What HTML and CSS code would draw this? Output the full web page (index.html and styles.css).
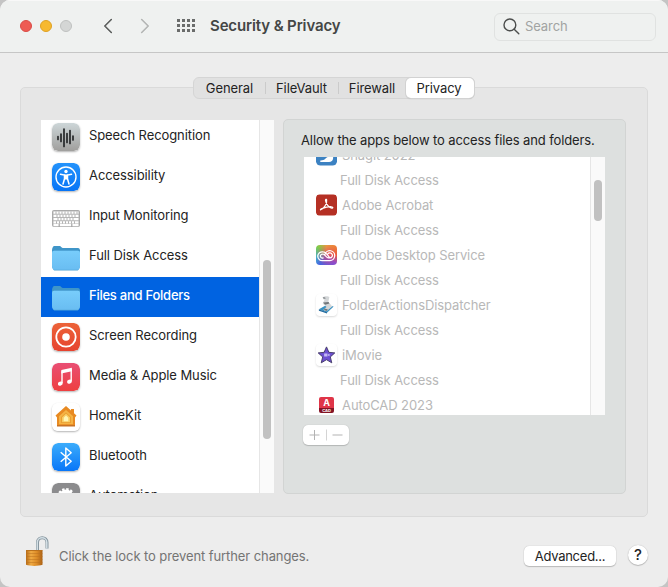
FILE: index.html
```
<!DOCTYPE html>
<html lang="en">
    <head>
        <meta charset="UTF-8">
        <meta name="viewport" content="width=device-width, initial-scale=1">
        <title>Security &amp; Privacy</title>
        <link rel="stylesheet" href="styles.css">
    </head>
    <body>
        <div class="window">
            <header class="titlebar">
                <div class="lights">
                    <span class="light red"></span>
                    <span class="light yellow"></span>
                    <span class="light gray"></span>
                </div>
                <svg class="nav-back" width="10" height="16" viewBox="0 0 10 16"><path d="M8.3 1.5 1.8 8l6.500 6.500"/></svg>
                <svg class="nav-forward" width="10" height="16" viewBox="0 0 10 16"><path d="M1.700 1.500 8.200 8l-6.500 6.500"/></svg>
                <svg class="nav-grid" width="18" height="13" viewBox="0 0 18 13">
                    <path d="M0 1.500h18M0 6.500h18M0 11.500h18"/>
                </svg>
                <h1 class="title">Security &amp; Privacy</h1>
                <div class="search">
                    <svg width="17" height="17" viewBox="0 0 17 17"><circle cx="6.900" cy="6.900" r="5.900"/><path d="m11.200 11.200 4.600 4.600"/></svg>
                    <span>Search</span>
                </div>
            </header>

            <nav class="tabs">
                <span class="tab general">General</span>
                <span class="tab filevault">FileVault</span>
                <span class="tab firewall">Firewall</span>
                <span class="tab active">Privacy</span>
            </nav>

            <main class="panel">
                <div class="sidebar">
                    <ul class="categories">
                        <li class="category">
                            <svg class="icon" viewBox="0 0 28 28">
                                <defs><linearGradient id="speech" x2="0" y2="1"><stop stop-color="#cdd6d8"/><stop offset="1" stop-color="#a09f9d"/></linearGradient></defs>
                                <rect width="28" height="28" rx="6" fill="url(#speech)"/>
                                <path d="M6 13.500v3M9 11v7.500M12 6v17.500M15 10.500v9M18 7.500v13M21 13v4" fill="none" stroke="#252729" stroke-width="1.700" stroke-linecap="round"/>
                            </svg>
                            <span>Speech Recognition</span>
                        </li>
                        <li class="category">
                            <svg class="icon" viewBox="0 0 28 28">
                                <defs><linearGradient id="blue" x2="0" y2="1"><stop stop-color="#2493fb"/><stop offset="1" stop-color="#0674f6"/></linearGradient></defs>
                                <rect width="28" height="28" rx="6" fill="url(#blue)"/>
                                <circle cx="14" cy="14" r="10" fill="none" stroke="#fff" stroke-width="1.400"/>
                                <circle cx="14" cy="8.500" r="1.700" fill="#fff"/>
                                <path d="m8.500 11.300 4 .8v3.700L11 21M19.500 11.300l-4 .8v3.700L17 21" fill="none" stroke="#fff" stroke-width="1.500" stroke-linecap="round"/>
                                <path d="M12 11.500h4v5h-4z" fill="#fff"/>
                            </svg>
                            <span>Accessibility</span>
                        </li>
                        <li class="category">
                            <svg class="icon flat" viewBox="0 0 28 28">
                                <rect x=".5" y="6.500" width="27" height="16" rx="1" fill="#b6b6b6" stroke="#aaa"/>
                                <path d="M1.500 8.700h25M1.500 11.900h25M1.500 15.100h25M1.500 18.300h25M1.500 21.200h5M8 21.200h11M20.500 21.200h6" stroke="#fff" stroke-width="2.300"/>
                                <path d="M4 7.500v2.500M7 7.500v2.500M10 7.500v2.500M13 7.500v2.500M16 7.500v2.500M19 7.500v2.500M22 7.500v2.500M25 7.500v2.500M5 10.700v2.500M8 10.700v2.500M11 10.700v2.500M14 10.700v2.500M17 10.700v2.500M20 10.700v2.500M23 10.700v2.500M6 14v2.500M9 14v2.500M12 14v2.500M15 14v2.500M18 14v2.500M21 14v2.500M4.500 17.200v2.500M7.500 17.200v2.500M10.500 17.200v2.500M13.500 17.200v2.500M16.500 17.200v2.500M19.500 17.200v2.500M22.500 17.200v2.500" stroke="#aaa" stroke-width=".9"/>
                            </svg>
                            <span>Input Monitoring</span>
                        </li>
                        <li class="category">
                            <svg class="icon flat" viewBox="0 0 28 28">
                                <defs><linearGradient id="folder" x2="0" y2="1"><stop stop-color="#78cdfb"/><stop offset="1" stop-color="#69bdf2"/></linearGradient></defs>
                                <path d="M0 4a2 2 0 0 1 2-2h5.500c1.500 0 2 2 3.500 2H26a2 2 0 0 1 2 2v16H0z" fill="#3f95c8"/>
                                <rect y="6.700" width="28" height="19.800" rx="2" fill="#4fa3d6"/>
                                <rect y="6.700" width="28" height="19.100" rx="2" fill="url(#folder)"/>
                            </svg>
                            <span>Full Disk Access</span>
                        </li>
                        <li class="category selected">
                            <svg class="icon flat" viewBox="0 0 28 28">
                                <path d="M0 4a2 2 0 0 1 2-2h5.500c1.500 0 2 2 3.500 2H26a2 2 0 0 1 2 2v16H0z" fill="#3f95c8"/>
                                <rect y="6.700" width="28" height="19.800" rx="2" fill="#4fa3d6"/>
                                <rect y="6.700" width="28" height="19.100" rx="2" fill="url(#folder)"/>
                            </svg>
                            <span>Files and Folders</span>
                        </li>
                        <li class="category">
                            <svg class="icon" viewBox="0 0 28 28">
                                <defs><linearGradient id="record" x2="0" y2="1"><stop stop-color="#ec6339"/><stop offset="1" stop-color="#e6432f"/></linearGradient></defs>
                                <rect width="28" height="28" rx="6" fill="url(#record)"/>
                                <circle cx="14" cy="14" r="9.700" fill="none" stroke="#fff" stroke-width="1.800"/>
                                <circle cx="14" cy="14" r="3.800" fill="#fff"/>
                            </svg>
                            <span>Screen Recording</span>
                        </li>
                        <li class="category">
                            <svg class="icon" viewBox="0 0 28 28">
                                <defs><linearGradient id="music" x2="0" y2="1"><stop stop-color="#e94f74"/><stop offset="1" stop-color="#ee3f40"/></linearGradient></defs>
                                <rect width="28" height="28" rx="6" fill="url(#music)"/>
                                <path d="M10 8.200v11.800M19.200 6.200v11.800" stroke="#fff" stroke-width="1.400"/>
                                <path d="M9.300 7 19.900 4.800v3.500L9.300 10.500z" fill="#fff"/>
                                <ellipse cx="8.300" cy="20.700" rx="2.500" ry="2" fill="#fff" transform="rotate(-20 8.300 20.700)"/>
                                <ellipse cx="17.500" cy="18.700" rx="2.500" ry="2" fill="#fff" transform="rotate(-20 17.500 18.700)"/>
                            </svg>
                            <span>Media &amp; Apple Music</span>
                        </li>
                        <li class="category">
                            <svg class="icon" viewBox="0 0 28 28">
                                <rect width="28" height="28" rx="6" fill="#fff"/>
                                <path d="M14 3 3.500 12.500 5 14.500v8.500h18v-8.500l1.500-2-2.500-2.200V6h-3v1.500z" fill="#e88a22"/>
                                <path d="M14 7 7 13.200v8h14v-8z" fill="#f5b445"/>
                                <path d="m14 9.500-4.800 4.400v6h9.600v-6z" fill="#e9992d"/>
                                <path d="m14 10.500-4 3.700v5h8v-5z" fill="#f8cc62"/>
                                <path d="m14 12.500-2.300 2.200v3.500h4.600v-3.500z" fill="#fff5b4"/>
                                <path d="M5 22h18v1.500H5z" fill="#c77325"/>
                            </svg>
                            <span>HomeKit</span>
                        </li>
                        <li class="category">
                            <svg class="icon" viewBox="0 0 28 28">
                                <defs><linearGradient id="bluetooth" x2="0" y2="1"><stop stop-color="#3cacfb"/><stop offset="1" stop-color="#0876f8"/></linearGradient></defs>
                                <rect width="28" height="28" rx="6" fill="url(#bluetooth)"/>
                                <path d="m8.700 9.300 10.500 9-5.400 4.700V5l5.400 4.700-10.500 9" fill="none" stroke="#fff" stroke-width="1.400" stroke-linejoin="round"/>
                            </svg>
                            <span>Bluetooth</span>
                        </li>
                        <li class="category">
                            <svg class="icon" viewBox="0 0 28 28">
                                <rect width="28" height="28" rx="6" fill="#8b8b8d"/>
                                <circle cx="14" cy="14" r="7.400" fill="#fff"/>
                                <circle cx="14" cy="14" r="7.800" fill="none" stroke="#fff" stroke-width="2.400" stroke-dasharray="2.400 1.684"/>
                                <circle cx="14" cy="14" r="3" fill="#8b8b8d"/>
                            </svg>
                            <span>Automation</span>
                        </li>
                    </ul>
                    <div class="track"><div class="thumb"></div></div>
                </div>

                <section class="details">
                    <p class="hint">Allow the apps below to access files and folders.</p>
                    <div class="app-box">
                        <ul class="apps">
                            <li class="app">
                                <svg class="app-icon" viewBox="0 0 22 22">
                                    <rect width="22" height="22" rx="4.500" fill="#3c82c2"/>
                                    <path d="M15 6H9a2.500 2.500 0 0 0 0 5h5.500c4 0 3.500 6.500-1 6.500H4.500c3.500 0 6-1.500 7-3.500" fill="#fff" stroke="#fff" stroke-width="1.500"/>
                                </svg>
                                <span>Snagit 2022</span>
                            </li>
                            <li class="access">Full Disk Access</li>
                            <li class="app">
                                <svg class="app-icon" viewBox="0 0 22 22">
                                    <rect width="22" height="22" rx="3.500" fill="#b53024"/>
                                    <path d="M5 16c2.500-.7 7-6 6.200-10.300-.3-1.300-1.500-.8-1.300.5.500 3.500 3.600 7.500 6.600 8.100 1.700.2 1.500-1.400-.2-1.500-3.500-.3-7 .8-10.300 2-1.300.5-1.800 1.500-1 1.200z" fill="none" stroke="#fff" stroke-width="1.200"/>
                                </svg>
                                <span>Adobe Acrobat</span>
                            </li>
                            <li class="access">Full Disk Access</li>
                            <li class="app">
                                <span class="app-icon cloud">
                                    <svg viewBox="0 0 20 20">
                                        <path d="M6.800 14.800a4.200 4.200 0 1 1 0-8.200c2.500 0 4 2.500 6 5.300M6.800 14.800h6.400a4.700 4.700 0 1 0-4.600-6M6.800 12.300a1.900 1.900 0 1 1 0-3.500c2 0 3 3.500 5 3.500h1.400a2.400 2.400 0 1 0-2-3.700" fill="none" stroke="#fff" stroke-width="1.200" stroke-linecap="round"/>
                                    </svg>
                                </span>
                                <span>Adobe Desktop Service</span>
                            </li>
                            <li class="access">Full Disk Access</li>
                            <li class="app">
                                <svg class="app-icon white" viewBox="0 0 22 22">
                                    <rect width="22" height="22" rx="4.500" fill="#fff"/>
                                    <path d="m3 15.500 8-4.500 7.500 1.500-7 6.500z" fill="#3992c3"/>
                                    <path d="m3 15.500 8.500 3v1.500L3 17z" fill="#246a9d"/>
                                    <path d="M7 3c1-1.500 6-1.500 7-.5l-1 5 4 5-6 5c-1.500 0-3.500-1-3-2l3-2.500L7 9.500l2-4z" fill="#d3d6d8"/>
                                    <path d="m7.500 8.500 5.700-.7.800 1.700-4.500 1.300zM8.500 14.500l4 1.200-1.500 1.500c-2 0-3-1.500-2.500-2.700z" fill="#72777a"/>
                                    <path d="M7 3c1.300-.8 3.500 0 3 1.500L8 5z" fill="#999da0"/>
                                </svg>
                                <span>FolderActionsDispatcher</span>
                            </li>
                            <li class="access">Full Disk Access</li>
                            <li class="app">
                                <svg class="app-icon white" viewBox="0 0 22 22">
                                    <rect width="22" height="22" rx="4.500" fill="#fff"/>
                                    <path d="m11 2.500 2.500 5.700 6.200.6-4.700 4.200 1.500 6.200-5.500-3.300-5.500 3.300L7 13 2.300 8.800l6.200-.6z" fill="#6d4fd2" stroke="#453c68" stroke-width="1"/>
                                    <path d="M8.500 9.500h3.500v3H8.500zM12.500 10.500l1.700-.8v2.600l-1.700-.8z" fill="#c4b9f4"/>
                                </svg>
                                <span>iMovie</span>
                            </li>
                            <li class="access">Full Disk Access</li>
                            <li class="app">
                                <span class="app-icon autocad"><b>A</b><small>CAD</small></span>
                                <span>AutoCAD 2023</span>
                            </li>
                        </ul>
                        <div class="track"><div class="thumb"></div></div>
                    </div>
                    <div class="plus-minus">
                        <svg width="46" height="20" viewBox="0 0 46 20"><path d="M6.500 10h10M11.500 5v10M29.500 10h10" stroke="#b3b3b3"/><path d="M23.500 4.500v11" stroke="#d4d4d4"/></svg>
                    </div>
                </section>
            </main>

            <footer class="footer">
                <svg class="lock" width="24" height="32" viewBox="0 0 24 32">
                    <defs>
                        <linearGradient id="brass"><stop stop-color="#b66b18"/><stop offset=".3" stop-color="#efaa43"/><stop offset=".65" stop-color="#dd8c27"/><stop offset="1" stop-color="#aa6116"/></linearGradient>
                    </defs>
                    <path d="M12.500 16V7.500c0-6.500 9.500-6.500 9.500 0v6" fill="none" stroke="#84949d" stroke-width="3"/>
                    <path d="M12.300 16V7.500c0-6.300 9.500-6.300 9.500 0v6" fill="none" stroke="#d4dfe5" stroke-width="1.500"/>
                    <path d="M1 15.500h16.500v14.300c-4 1.500-12.500 1.500-16.500 0z" fill="url(#brass)"/>
                    <path d="M1 18.500h16.500M1 21.500h16.500M1 24.500h16.500M1 27.500h16.500" stroke="#ba711f" stroke-width=".5"/>
                    <path d="M1 15.500h16.500" stroke="#ba711c"/>
                </svg>
                <span class="lock-text">Click the lock to prevent further changes.</span>
                <button type="button" class="advanced">Advanced...</button>
                <button type="button" class="help">?</button>
            </footer>
        </div>
    </body>
</html>
```

FILE: styles.css
```
* {
    box-sizing: border-box;
}
body {
    margin: 0;
    background: #c4c4c4;
    font-family: Inter, "Liberation Sans", sans-serif;
    font-size: 13px;
    letter-spacing: -.09px;
    color: #232323;
}
ul, p, h1 {
    margin: 0;
    padding: 0;
    list-style: none;
}
svg {
    display: block;
    flex: none;
}
button {
    font: inherit;
    letter-spacing: inherit;
    color: inherit;
    border: none;
    padding: 0;
}
.window {
    width: 668px;
    height: 587px;
    display: flex;
    flex-direction: column;
    background: #ededed;
    border-radius: 10px;
    overflow: hidden;
}

/* title bar */
.titlebar {
    height: 53px;
    flex: none;
    display: flex;
    align-items: center;
    padding: 0 12px 2px 20px;
    background: #eff1f0;
    border-top: 1px solid #f8f8f8;
    border-bottom: 1px solid #c6c6c6;
}
.lights {
    display: flex;
    gap: 8px;
}
.light {
    width: 12px;
    height: 12px;
    border-radius: 50%;
    border: 1px solid;
}
.red {
    background: #ee5b54;
    border-color: #da4c46;
}
.yellow {
    background: #f7b930;
    border-color: #dfa124;
}
.gray {
    background: #d4d6d5;
    border-color: #bfc1c0;
}
.nav-back, .nav-forward {
    fill: none;
    stroke: #5b5d5c;
    stroke-width: 1.6;
    stroke-linecap: round;
    stroke-linejoin: round;
    margin-left: 31px;
}
.nav-forward {
    stroke: #b3b5b4;
    margin-left: 27px;
}
.nav-grid {
    margin-left: 27px;
    stroke: #6a6c6b;
    stroke-width: 3;
    stroke-dasharray: 3 2;
}
.title {
    margin-left: 15px;
    font-size: 15px;
    font-weight: 600;
    letter-spacing: -.13px;
    color: #444645;
}
.search {
    width: 162px;
    height: 28px;
    margin-left: auto;
    margin-top: 2px;
    padding-left: 8px;
    display: flex;
    align-items: center;
    gap: 5px;
    border: 1px solid #e0e2e1;
    border-radius: 6px;
    color: #a1a3a2;
}
.search span {
    margin-top: -1px;
}
.search svg {
    fill: none;
    stroke: #4c4e4d;
    stroke-width: 1.4;
    stroke-linecap: round;
}

/* tabs */
.tabs {
    position: relative;
    z-index: 1;
    align-self: center;
    flex: none;
    display: flex;
    width: 282px;
    height: 22px;
    margin-top: 24px;
    margin-bottom: -12px;
    background: #e1e1e1;
    border: 1px solid #d5d5d5;
    border-radius: 6px;
}
.tab {
    display: flex;
    align-items: center;
    justify-content: center;
    height: 20px;
    padding-bottom: 1px;
}
.general {
    width: 71px;
}
.filevault {
    width: 73px;
}
.firewall {
    width: 68px;
}
.filevault, .firewall {
    background: linear-gradient(#cbcbcb, #cbcbcb) left center / 1px 12px no-repeat;
}
.active {
    width: 68px;
    padding-right: 2px;
    background: #fff;
    border-radius: 5px;
    box-shadow: 0 0 0 1px #d2d2d2, 0 1px 1px #aaa;
}

/* main panel */
.panel {
    width: 628px;
    height: 430px;
    flex: none;
    margin-left: 20px;
    padding: 31px 21px 22px 20px;
    display: flex;
    justify-content: space-between;
    background: #e6e6e6;
    border: 1px solid #dadada;
    border-radius: 5px;
}
.sidebar {
    width: 233px;
    height: 373px;
    margin-top: 1px;
    display: flex;
    background: #fff;
    overflow: hidden;
}
.categories {
    width: 218px;
    margin-top: -3px;
    flex: none;
}
.category {
    height: 40px;
    padding: 0 0 1px 11px;
    display: flex;
    align-items: center;
    gap: 9px;
}
.category span {
    margin-top: -3px;
}
.icon {
    width: 28px;
    height: 28px;
    border-radius: 6px;
    box-shadow: 0 1px 2px rgba(0, 0, 0, .3);
}
.flat {
    box-shadow: none;
}
.category .flat {
    margin-top: 2px;
}
.selected {
    background: #0063e1;
    color: #fff;
    font-weight: 500;
    letter-spacing: -.25px;
}
.track {
    flex: 1;
    background: #fafafa;
    border-left: 1px solid #e6e6e6;
}
.thumb {
    width: 8px;
    margin-left: 3px;
    background: #c1c1c1;
    border-radius: 4px;
}
.sidebar .thumb {
    height: 179px;
    margin-top: 140px;
}

.details {
    width: 343px;
    height: 375px;
    padding: 12px 20px 0 20px;
    background: #dde0df;
    border: 1px solid #d2d4d3;
    border-radius: 5px;
}
.hint {
    height: 25px;
    line-height: 16px;
    margin-left: -3px;
    letter-spacing: -.12px;
    white-space: nowrap;
}
.app-box {
    width: 301px;
    height: 258px;
    display: flex;
    background: #fff;
    overflow: hidden;
}
.apps {
    width: 286px;
    flex: none;
    margin-top: -14px;
    color: #b8b8b8;
}
.app {
    height: 25px;
    padding-left: 12px;
    padding-bottom: 2px;
    display: flex;
    align-items: center;
    gap: 5px;
}
.app-icon {
    width: 21px;
    height: 22px;
    flex: none;
    border-radius: 4px;
}
.white {
    box-shadow: 0 1px 2px rgba(0, 0, 0, .15);
}
.access {
    height: 25px;
    padding-left: 36px;
    line-height: 25px;
}
.cloud {
    height: 20px;
    background: radial-gradient(circle at 50% 50%, rgba(225, 70, 110, .8), transparent 75%), conic-gradient(#e9a13b, #ee5a38 25%, #8f4ccb 37%, #4764e3 60%, #3db5c9 72%, #80ca49 87%, #e9a13b);
}
.autocad {
    width: 15px;
    height: 16px;
    margin: 0 3px;
    border-radius: 2px;
    background: linear-gradient(#df3548 68%, #841425 68%);
    color: #fff;
    display: flex;
    flex-direction: column;
    align-items: center;
}
.autocad b {
    font-size: 9px;
    line-height: 11px;
}
.autocad small {
    font-size: 4px;
    line-height: 5px;
    font-weight: 700;
}
.app-box .thumb {
    height: 41px;
    margin-top: 23px;
}
.plus-minus {
    width: 46px;
    height: 20px;
    margin-top: 10px;
    margin-left: -1px;
    background: #fff;
    border-radius: 5px;
    box-shadow: 0 0 1px #aaa, 0 1px 1px #b5b8b7;
}

/* footer */
.footer {
    height: 70px;
    padding: 0 20px 0 25px;
    display: flex;
    align-items: center;
}
.lock {
    margin-top: -3px;
}
.lock-text {
    margin-left: 10px;
    margin-top: 8px;
    color: #747474;
    white-space: nowrap;
}
.advanced {
    width: 92px;
    height: 20px;
    margin-left: auto;
    margin-top: 8px;
    padding-bottom: 1px;
    letter-spacing: -.25px;
    background: #fff;
    border-radius: 5px;
    box-shadow: 0 0 1px #aaa, 0 1px 1px #bbb;
}
.help {
    width: 20px;
    height: 20px;
    margin-left: 12px;
    margin-top: 6px;
    background: #fff;
    border-radius: 50%;
    font-size: 15px;
    font-weight: 500;
    line-height: 20px;
    box-shadow: 0 0 1px #aaa, 0 1px 1px #bbb;
}
```
